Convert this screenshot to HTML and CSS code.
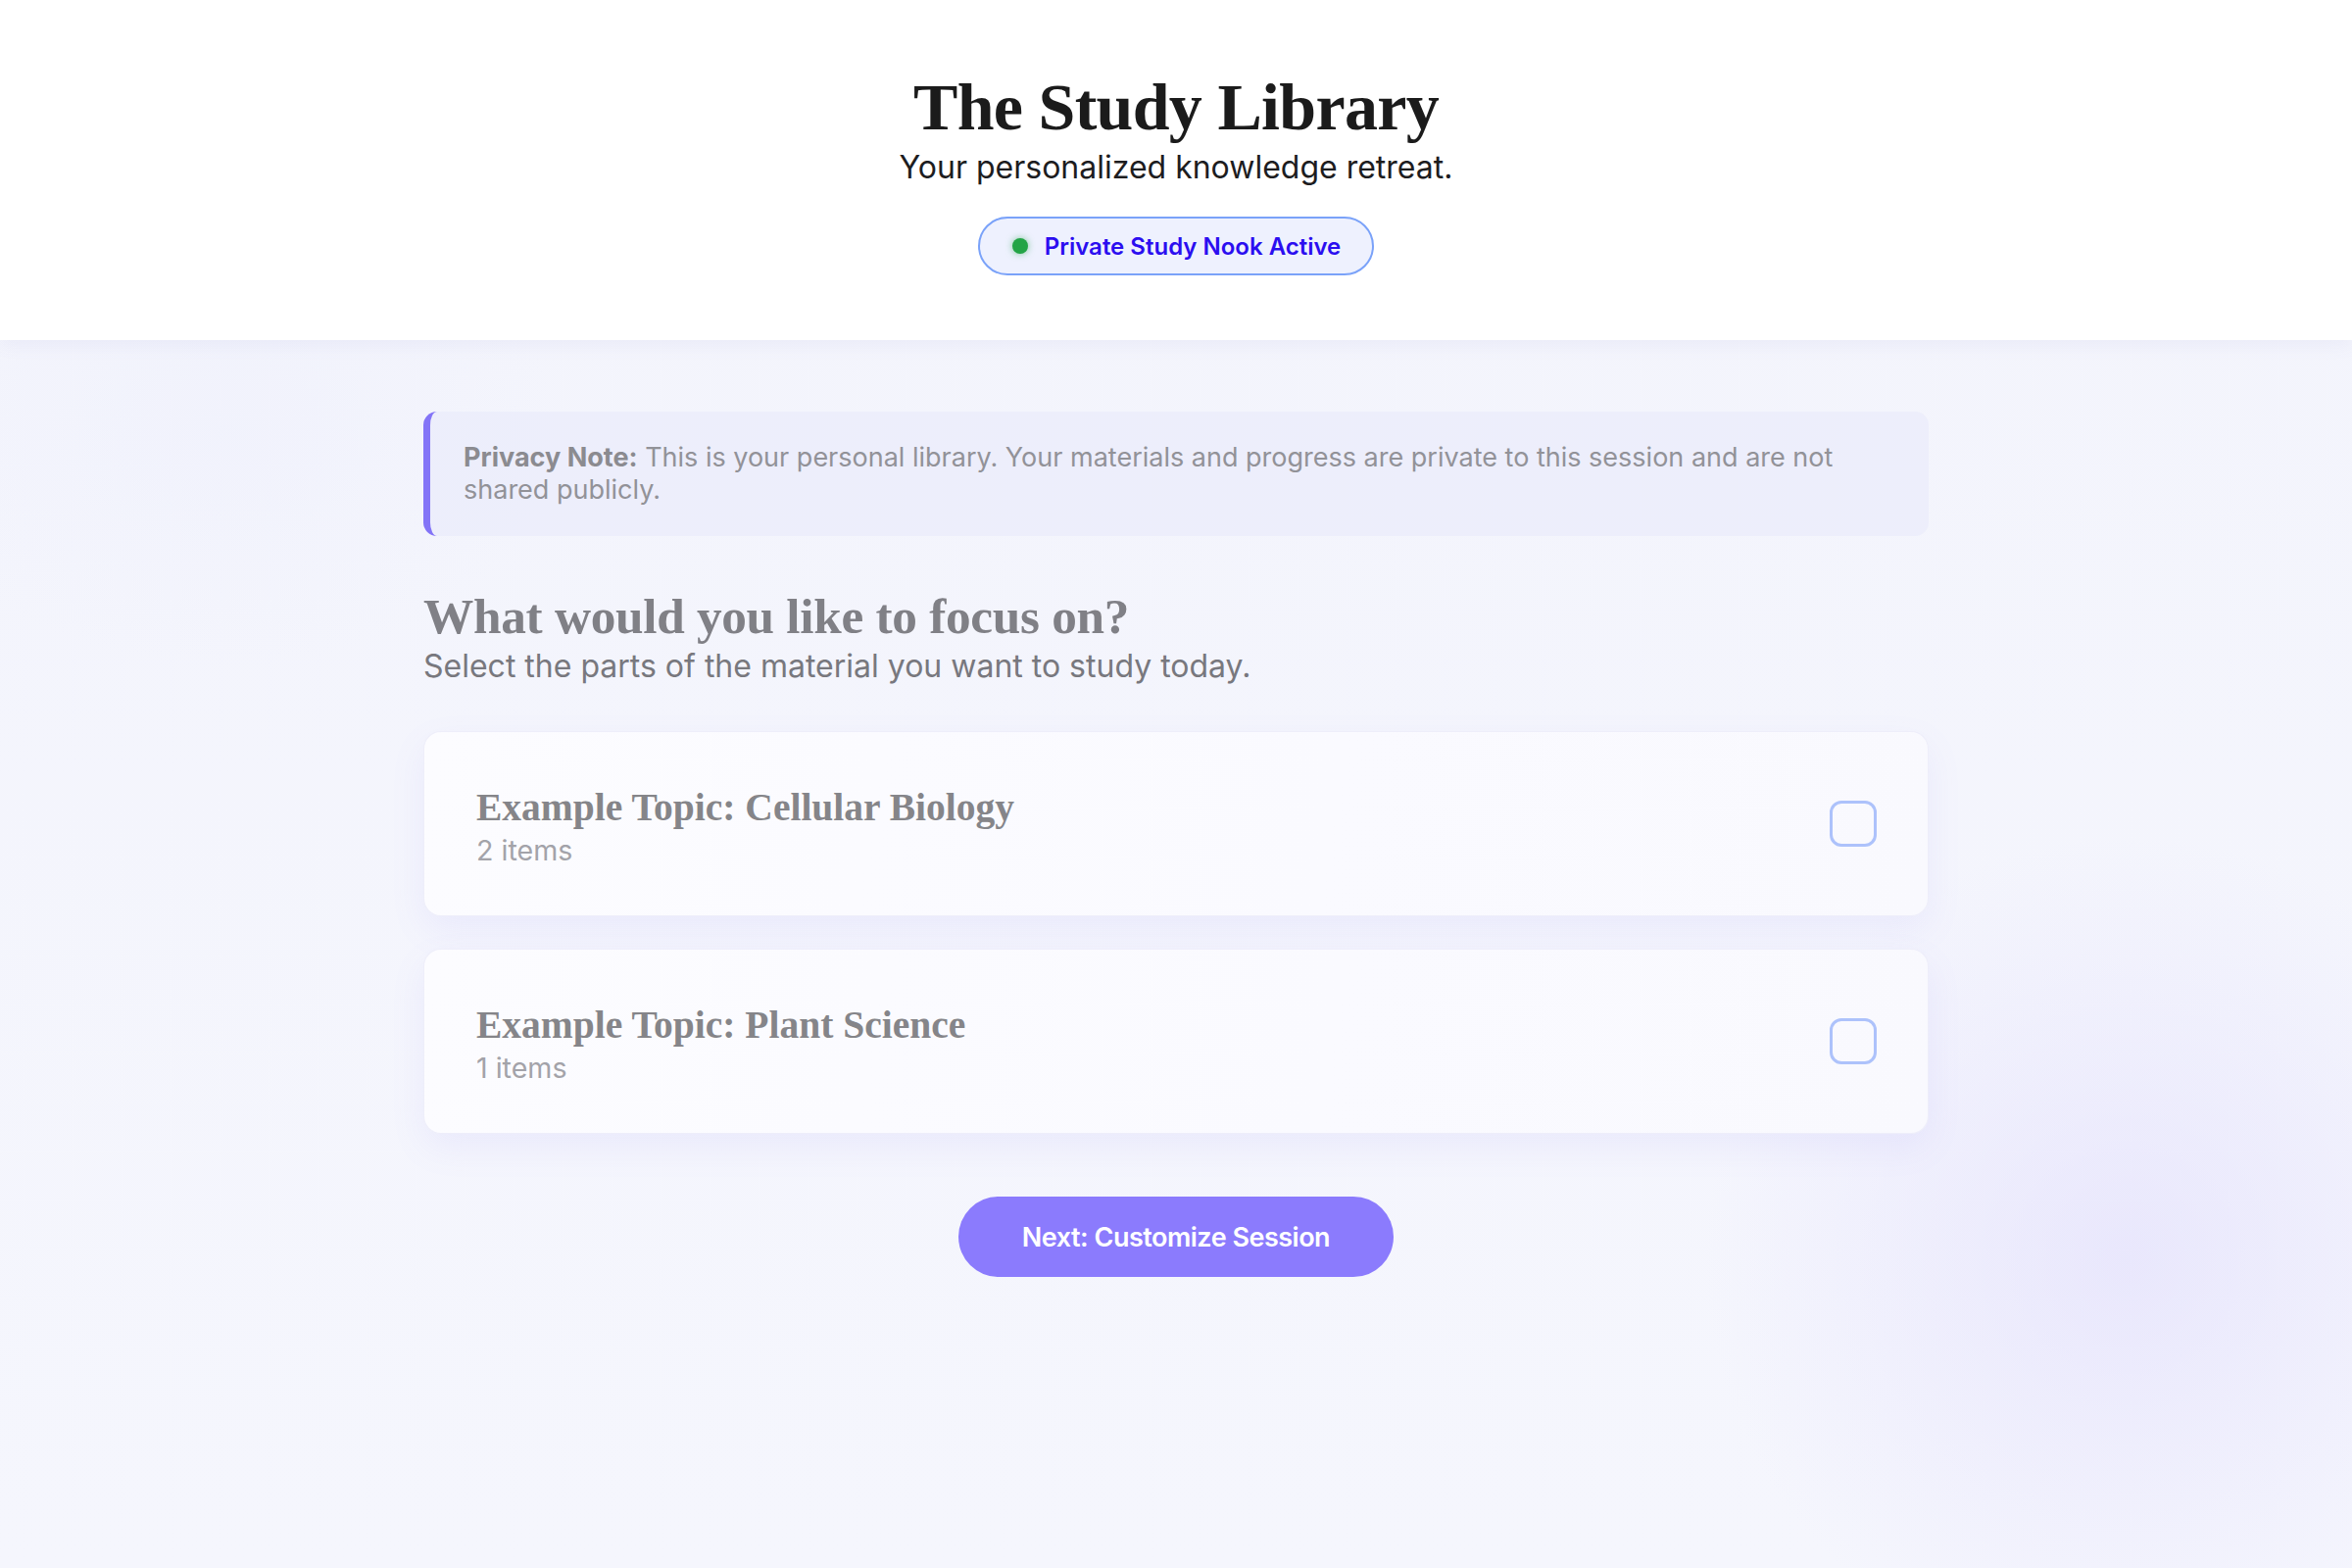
FILE: index.html
```html
<!DOCTYPE html>
<html lang="en">
<head>
<meta charset="utf-8">
<title>The Study Library</title>
<link rel="stylesheet" href="styles.css">
</head>
<body>
  <header class="site-header">
    <h1 class="site-title">The Study Library</h1>
    <p class="site-subtitle">Your personalized knowledge retreat.</p>
    <div class="status-badge">
      <span class="status-dot"></span>
      <span class="status-text">Private Study Nook Active</span>
    </div>
  </header>

  <main class="main">
    <div class="container">
      <div class="privacy-note">
        <strong>Privacy Note:</strong> This is your personal library. Your materials and progress are private to this session and are not shared publicly.
      </div>

      <h2 class="section-title">What would you like to focus on?</h2>
      <p class="section-subtitle">Select the parts of the material you want to study today.</p>

      <div class="topic-list">
        <label class="topic-card">
          <div class="topic-info">
            <h3 class="topic-title">Example Topic: Cellular Biology</h3>
            <span class="topic-count">2 items</span>
          </div>
          <span class="topic-check"></span>
        </label>
        <label class="topic-card">
          <div class="topic-info">
            <h3 class="topic-title">Example Topic: Plant Science</h3>
            <span class="topic-count">1 items</span>
          </div>
          <span class="topic-check"></span>
        </label>
      </div>

      <div class="actions">
        <button class="primary-btn" type="button">Next: Customize Session</button>
      </div>
    </div>
  </main>
</body>
</html>
```

FILE: styles.css
```css
* {
  box-sizing: border-box;
}

html, body {
  margin: 0;
  padding: 0;
}

body {
  min-height: 1600px;
  font-family: "Inter", "Liberation Sans", sans-serif;
  background-color: #f4f5fc;
  background-image:
    radial-gradient(circle at 2170px 1285px, rgba(228, 225, 252, 0.7) 0, rgba(228, 225, 252, 0) 430px),
    radial-gradient(ellipse 340px 240px at 230px 440px, rgba(236, 238, 252, 0.35) 0, rgba(236, 238, 252, 0) 100%),
    linear-gradient(180deg, #f3f4fc 0%, #f5f6fd 100%);
  display: flex;
  flex-direction: column;
}

.site-header {
  background: #ffffff;
  padding: 72px 0 66px;
  display: flex;
  flex-direction: column;
  align-items: center;
  box-shadow: 0 4px 18px rgba(120, 120, 190, 0.08);
  position: relative;
  z-index: 1;
}

.site-title {
  margin: 0;
  font-family: "Liberation Serif", "Times New Roman", serif;
  font-weight: 700;
  font-size: 68px;
  line-height: 75px;
  letter-spacing: -0.7px;
  color: #1b1b1b;
}

.site-subtitle {
  margin: 1px 0 0;
  font-size: 32px;
  line-height: 46px;
  color: #1d1d1f;
}

.status-badge {
  margin-top: 27px;
  display: flex;
  align-items: center;
  gap: 17px;
  height: 60px;
  padding: 0 32px 0 33px;
  border: 2px solid #7aa2f9;
  border-radius: 30px;
  background: #eef1fe;
}

.status-dot {
  width: 16px;
  height: 16px;
  border-radius: 50%;
  background: #23a446;
  box-shadow: 0 0 7px rgba(35, 164, 70, 0.55);
}

.status-text {
  font-size: 24px;
  font-weight: 600;
  color: #2b0ef0;
}

.main {
  flex: 1;
}

.container {
  width: 1536px;
  margin: 0 auto;
  padding-top: 73px;
}

.privacy-note {
  border-left: 7px solid #8374f7;
  border-radius: 14px;
  background: rgba(234, 235, 251, 0.7);
  padding: 30px 36px 31px 34px;
  font-size: 27px;
  line-height: 33px;
  color: #929298;
}

.privacy-note strong {
  font-weight: 700;
  color: #8b8b90;
}

.section-title {
  margin: 54px 0 0;
  font-family: "Liberation Serif", "Times New Roman", serif;
  font-weight: 700;
  font-size: 51.3px;
  line-height: 55px;
  letter-spacing: -0.3px;
  color: #808086;
}

.section-subtitle {
  margin: 1px 0 0;
  font-size: 32px;
  line-height: 45px;
  color: #78787e;
}

.topic-list {
  margin-top: 44px;
  display: flex;
  flex-direction: column;
  gap: 33px;
}

.topic-card {
  display: flex;
  align-items: center;
  justify-content: space-between;
  padding: 54px 52px 46px 53px;
  background: linear-gradient(100deg, #fcfcff 0%, #fafaff 60%, #f9f9fe 100%);
  border: 1px solid rgba(236, 236, 250, 0.9);
  border-radius: 18px;
  box-shadow: 0 14px 36px rgba(128, 118, 240, 0.09);
}

.topic-info {
  display: flex;
  flex-direction: column;
}

.topic-title {
  margin: 0;
  font-family: "Liberation Serif", "Times New Roman", serif;
  font-weight: 700;
  font-size: 39.5px;
  line-height: 47px;
  color: #858589;
}

.topic-count {
  font-size: 28.6px;
  line-height: 40px;
  color: #a3a3a9;
}

.topic-check {
  width: 48px;
  height: 47px;
  border: 3.5px solid #adc2fb;
  border-radius: 12px;
  margin-top: -8px;
}

.actions {
  margin-top: 64px;
  display: flex;
  justify-content: center;
}

.primary-btn {
  width: 444px;
  height: 82px;
  border: none;
  border-radius: 41px;
  background: #8b7bfd;
  color: #ffffff;
  font-family: "Inter", "Liberation Sans", sans-serif;
  font-size: 27px;
  font-weight: 600;
  letter-spacing: -0.5px;
  cursor: pointer;
}
```
